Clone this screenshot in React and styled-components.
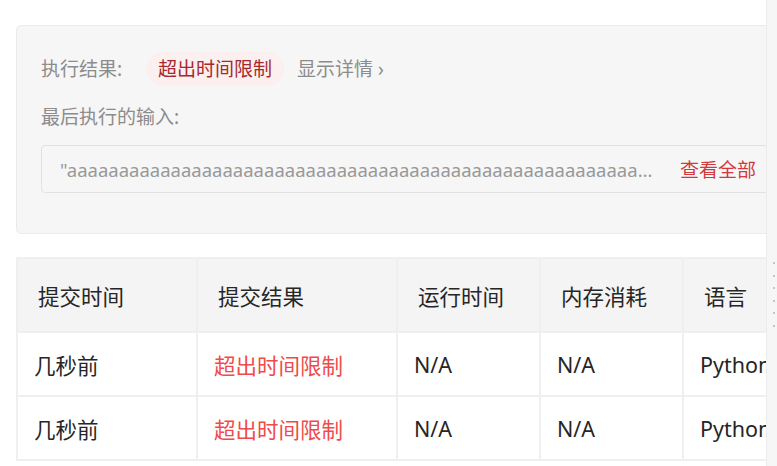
import styled, { createGlobalStyle } from "styled-components";

const GlobalStyle = createGlobalStyle`
  html, body {
    margin: 0;
    padding: 0;
    background: #ffffff;
    font-family: "Noto Sans", "Noto Sans CJK SC", sans-serif;
  }
`;

const StyledPage = styled.div`
  display: flex;
  width: 777px;
  height: 466px;
  overflow: hidden;
`;

const StyledPane = styled.div`
  width: 766px;
  flex-shrink: 0;
  overflow: hidden;
  padding: 25px 0 0 16px;
  box-sizing: border-box;
  background: #ffffff;
`;

const StyledGutter = styled.div`
  flex: 1;
  background: #f6f6f6;
  border-left: 1px solid #ececec;
  display: flex;
  flex-direction: column;
  align-items: flex-end;
  gap: 10.5px;
  padding-top: 262px;
  padding-right: 2px;
`;

const StyledGripDot = styled.span`
  width: 2px;
  height: 2px;
  border-radius: 1px;
  background: #b4b4b4;
`;

const StyledResultPanel = styled.section`
  width: 784px;
  box-sizing: border-box;
  padding: 26px 24px 40px 24px;
  background: #f6f6f6;
  border: 1px solid #ebebeb;
  border-radius: 5px;
  font-size: 19px;
  color: #8c8c8c;
`;

const StyledStatusRow = styled.div`
  display: flex;
  align-items: center;
  height: 34px;
  line-height: 34px;
`;

const StyledLabel = styled.span`
  margin-right: ${(p) => p.$gap || 0}px;
`;

const StyledBadge = styled.span`
  padding: 0 12px;
  height: 34px;
  border-radius: 17px;
  background: #fcefef;
  color: #a52a2d;
  margin-right: 13px;
`;

const StyledDetailLink = styled.span`
  color: #8c8c8c;
`;

const StyledInputLabel = styled.div`
  margin-top: 17px;
  height: 28px;
  line-height: 28px;
`;

const StyledInputBox = styled.div`
  margin-top: 14px;
  height: 48px;
  box-sizing: border-box;
  border: 1px solid #e2e2e2;
  border-radius: 4px;
  padding: 0 18px;
  display: flex;
  align-items: center;
`;

const StyledInputText = styled.span`
  flex: 1;
  min-width: 0;
  white-space: nowrap;
  overflow: hidden;
  text-overflow: ellipsis;
  color: #999999;
  font-size: 18.5px;
  margin-right: 26px;
`;

const StyledViewAll = styled.span`
  color: #d0393e;
  white-space: nowrap;
`;

const StyledTable = styled.table`
  margin-top: 23px;
  width: 800px;
  border-collapse: collapse;
  table-layout: fixed;
  font-size: 21.5px;
  color: #262626;
`;

const StyledHeadCell = styled.th`
  height: 72px;
  padding: 0 0 0 20px;
  text-align: left;
  font-weight: 400;
  background: #f4f4f4;
  border: 2px solid #efefef;
  white-space: nowrap;
  overflow: hidden;
`;

const StyledCell = styled.td`
  height: 62px;
  padding: 0 0 0 16px;
  border: 2px solid #efefef;
  color: ${(p) => (p.$danger ? "#f04a4a" : "#262626")};
  white-space: nowrap;
  overflow: hidden;
`;

const columns = [
  { title: "提交时间", width: 180 },
  { title: "提交结果", width: 200 },
  { title: "运行时间", width: 143 },
  { title: "内存消耗", width: 143 },
  { title: "语言", width: 134 },
];

const submissions = [
  { time: "几秒前", result: "超出时间限制", runtime: "N/A", memory: "N/A", lang: "Python" },
  { time: "几秒前", result: "超出时间限制", runtime: "N/A", memory: "N/A", lang: "Python" },
];

export default function App() {
  const lastInput = '"' + "a".repeat(120) + '"';

  return (
    <>
      <GlobalStyle />
      <StyledPage>
        <StyledPane>
          <StyledResultPanel>
            <StyledStatusRow>
              <StyledLabel $gap={24}>执行结果:</StyledLabel>
              <StyledBadge>超出时间限制</StyledBadge>
              <StyledDetailLink>显示详情 ›</StyledDetailLink>
            </StyledStatusRow>
            <StyledInputLabel>最后执行的输入:</StyledInputLabel>
            <StyledInputBox>
              <StyledInputText>{lastInput}</StyledInputText>
              <StyledViewAll>查看全部</StyledViewAll>
            </StyledInputBox>
          </StyledResultPanel>

          <StyledTable>
            <colgroup>
              {columns.map((col) => (
                <col key={col.title} style={{ width: col.width }} />
              ))}
            </colgroup>
            <thead>
              <tr>
                {columns.map((col) => (
                  <StyledHeadCell key={col.title}>{col.title}</StyledHeadCell>
                ))}
              </tr>
            </thead>
            <tbody>
              {submissions.map((row, i) => (
                <tr key={i}>
                  <StyledCell>{row.time}</StyledCell>
                  <StyledCell $danger>{row.result}</StyledCell>
                  <StyledCell>{row.runtime}</StyledCell>
                  <StyledCell>{row.memory}</StyledCell>
                  <StyledCell>{row.lang}</StyledCell>
                </tr>
              ))}
            </tbody>
          </StyledTable>
        </StyledPane>
        <StyledGutter>
          {Array.from({ length: 6 }).map((_, i) => (
            <StyledGripDot key={i} />
          ))}
        </StyledGutter>
      </StyledPage>
    </>
  );
}
